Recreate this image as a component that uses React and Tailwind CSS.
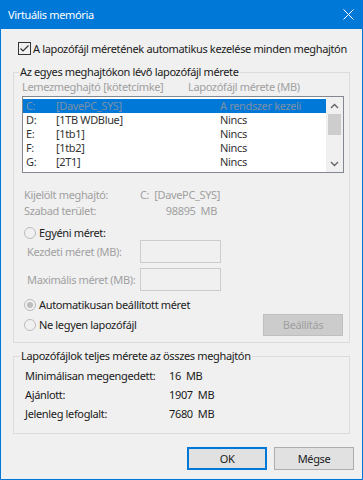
import React from 'react';

const drives = [
  { letter: 'C:', label: '[DavePC_SYS]', size: 'A rendszer kezeli', selected: true },
  { letter: 'D:', label: '[1TB WDBlue]', size: 'Nincs' },
  { letter: 'E:', label: '[1tb1]', size: 'Nincs' },
  { letter: 'F:', label: '[1tb2]', size: 'Nincs' },
  { letter: 'G:', label: '[2T1]', size: 'Nincs' },
];

const totals = [
  { label: 'Minimálisan megengedett:', value: '16  MB' },
  { label: 'Ajánlott:', value: '1907  MB' },
  { label: 'Jelenleg lefoglalt:', value: '7680  MB' },
];

const Radio = ({ checked }) => (
  <span className="w-[12px] h-[12px] rounded-full border border-[#bcbcbc] bg-[#f0f0f0] flex items-center justify-center shrink-0">
    {checked && <span className="w-[6px] h-[6px] rounded-full bg-[#bcbcbc]" />}
  </span>
);

const Chevron = ({ up }) => (
  <svg width="9" height="6" viewBox="0 0 9 6">
    <path d={up ? 'M1 5 L4.5 1.5 L8 5' : 'M1 1 L4.5 4.5 L8 1'} fill="none" stroke="#606060" strokeWidth="1.3" />
  </svg>
);

const App = () => {
  return (
    <div className="w-[363px] h-[480px] flex flex-col bg-[#f0f0f0] border-x border-b border-[#0078d7] font-['Noto_Sans'] text-[11px] leading-[16px] tracking-[-0.35px] text-[#1a1a1a] whitespace-pre">
      {/* title bar */}
      <div className="h-[29px] bg-[#0078d7] flex items-center justify-between pl-[7px] pr-[8px] shrink-0">
        <span className="text-white">Virtuális memória</span>
        <svg width="11" height="11" viewBox="0 0 11 11">
          <path d="M0.5 0.5 L10.5 10.5 M10.5 0.5 L0.5 10.5" stroke="#fff" strokeWidth="1" />
        </svg>
      </div>

      {/* checkbox */}
      <div className="flex items-center gap-[2px] ml-[17px] mt-[13px] h-[13px]">
        <span className="w-[13px] h-[13px] border border-[#333] bg-[#f0f0f0] flex items-center justify-center">
          <svg width="11" height="11" viewBox="0 0 11 11">
            <path d="M1.5 5.5 L4 8 L9.5 2.5" fill="none" stroke="#333" strokeWidth="1.2" />
          </svg>
        </span>
        <span>A lapozófájl méretének automatikus kezelése minden meghajtón</span>
      </div>

      {/* group 1 */}
      <div className="mt-[17px] ml-[12px] w-[337px] border border-[#dcdcdc] pb-[6px]">
        <div className="-mt-[9px] ml-[5px] px-[1px] w-fit bg-[#f0f0f0]">Az egyes meghajtókon lévő lapozófájl mérete</div>

        <div className="flex h-[14px] items-center text-[#a0a0a0] ml-[8px]">
          <span className="w-[166px]">Lemezmeghajtó [kötetcímke]</span>
          <span>Lapozófájl mérete (MB)</span>
        </div>

        <div className="mt-[2px] ml-[8px] w-[322px] h-[77px] border border-[#828790] bg-white flex">
          <div className="flex-1 pt-[2px]">
            {drives.map((d) => (
              <div
                key={d.letter}
                className={`flex h-[14px] items-center pl-[3px] ${d.selected ? 'bg-[#0078d7] text-[#7d90a6]' : 'text-[#333]'}`}
              >
                <span className="w-[30px]">{d.letter}</span>
                <span className="w-[164px]">{d.label}</span>
                <span>{d.size}</span>
              </div>
            ))}
          </div>
          <div className="w-[17px] bg-[#f0f0f0] flex flex-col items-center">
            <div className="h-[17px] flex items-center justify-center">
              <Chevron up />
            </div>
            <div className="w-[13px] h-[21px] bg-[#cdcdcd]" />
            <div className="flex-1" />
            <div className="h-[17px] flex items-center justify-center">
              <Chevron />
            </div>
          </div>
        </div>

        <div className="mt-[14px] ml-[10px] text-[#a0a0a0]">
          <div className="flex">
            <span className="w-[116px]">Kijelölt meghajtó:</span>
            <span>C:  [DavePC_SYS]</span>
          </div>
          <div className="flex">
            <span className="w-[116px]">Szabad terület:</span>
            <span className="w-[77px] text-right">98895  MB</span>
          </div>
        </div>

        <div className="mt-[6px] ml-[10px] h-[15px] flex items-center gap-[3px] text-[#222]">
          <Radio />
          <span>Egyéni méret:</span>
        </div>

        <div className="ml-[13px] flex items-center text-[#a0a0a0]">
          <span className="w-[113px]">Kezdeti méret (MB):</span>
          <div className="w-[81px] h-[23px] border border-[#cccccc] bg-[#f0f0f0]" />
        </div>
        <div className="mt-[5px] ml-[13px] flex items-center text-[#a0a0a0]">
          <span className="w-[113px]">Maximális méret (MB):</span>
          <div className="w-[81px] h-[23px] border border-[#cccccc] bg-[#f0f0f0]" />
        </div>

        <div className="mt-[6px] ml-[10px] h-[16px] flex items-center gap-[3px] text-[#222]">
          <Radio checked />
          <span>Automatikusan beállított méret</span>
        </div>

        <div className="mt-[1px] ml-[10px] mr-[6px] flex items-center justify-between text-[#222]">
          <div className="flex items-center gap-[3px]">
            <Radio />
            <span>Ne legyen lapozófájl</span>
          </div>
          <button className="w-[80px] h-[22px] bg-[#cccccc] border border-[#bfbfbf] text-[#a0a0a0]">Beállítás</button>
        </div>
      </div>

      {/* group 2 */}
      <div className="mt-[13px] ml-[12px] w-[337px] border border-[#dcdcdc] pb-[10px]">
        <div className="-mt-[9px] ml-[6px] px-[1px] w-fit bg-[#f0f0f0]">Lapozófájlok teljes mérete az összes meghajtón</div>
        <div className="mt-[2px] ml-[11px]">
          {totals.map((t) => (
            <div key={t.label} className="flex h-[19px] items-center">
              <span className="w-[144px]">{t.label}</span>
              <span>{t.value}</span>
            </div>
          ))}
        </div>
      </div>

      {/* buttons */}
      <div className="mt-[13px] flex justify-end gap-[7px] pr-[8px]">
        <button className="w-[80px] h-[23px] bg-[#e1e1e1] border-2 border-[#0078d7] text-[#1a1a1a]">OK</button>
        <button className="w-[80px] h-[23px] bg-[#e1e1e1] border border-[#adadad] text-[#1a1a1a]">Mégse</button>
      </div>
    </div>
  );
};

export default App;
